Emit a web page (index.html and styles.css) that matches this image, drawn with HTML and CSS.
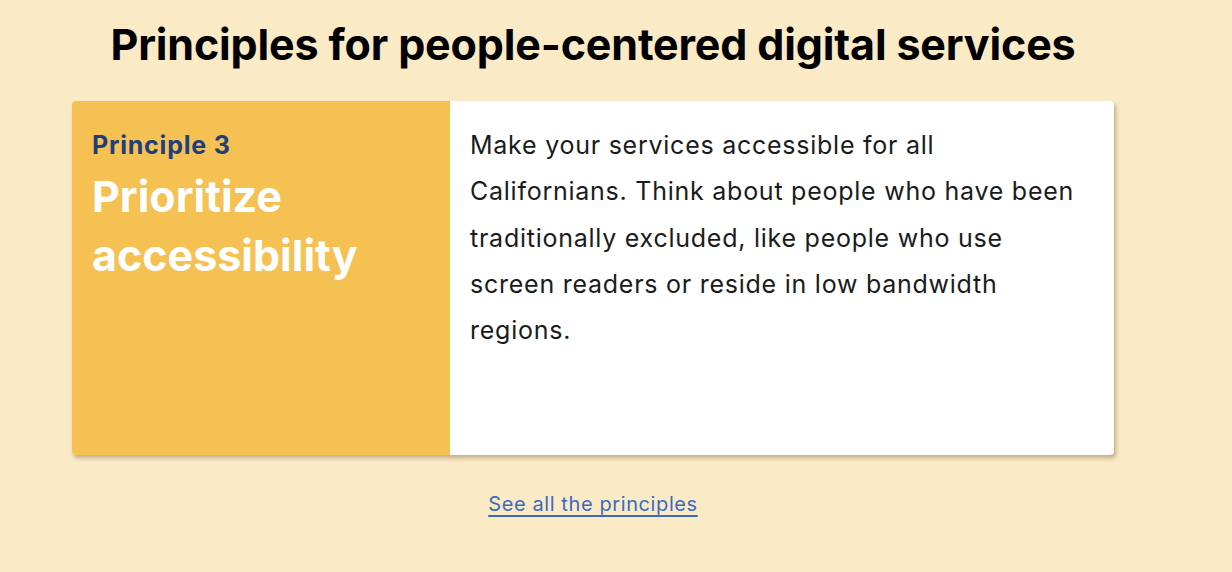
FILE: index.html
```html
<!DOCTYPE html>
<html lang="en">
<head>
<meta charset="utf-8">
<title>Principles for people-centered digital services</title>
<link rel="stylesheet" href="styles.css">
</head>
<body>
<main class="wrap">
  <h1 class="title">Principles for people-centered digital services</h1>
  <section class="card">
    <div class="card-side">
      <p class="eyebrow">Principle 3</p>
      <h2 class="card-title">Prioritize accessibility</h2>
    </div>
    <div class="card-body">
      <p class="card-text">Make your services accessible for all Californians. Think about people who have been traditionally excluded, like people who use screen readers or reside in low bandwidth regions.</p>
    </div>
  </section>
  <div class="more">
    <a class="more-link" href="#">See all the principles</a>
  </div>
</main>
</body>
</html>
```

FILE: styles.css
```css
html, body {
  margin: 0;
  padding: 0;
}
body {
  background: #fbeac6;
  font-family: Inter, "Liberation Sans", sans-serif;
  color: #1b1b1b;
  width: 1232px;
  height: 572px;
  overflow: hidden;
}
.wrap {
  width: 1042px;
  margin-left: 72px;
  display: flex;
  flex-direction: column;
  align-items: center;
}
.title {
  margin: 14px 0 0;
  font-size: 43px;
  line-height: 60px;
  font-weight: 700;
  letter-spacing: -0.15px;
  color: #000;
  text-align: center;
}
.card {
  margin-top: 27px;
  width: 100%;
  height: 354px;
  display: flex;
  border-radius: 4px;
  overflow: hidden;
  box-shadow: 2px 3px 4px rgba(80, 60, 20, 0.35);
  background: #fff;
}
.card-side {
  width: 378px;
  flex: none;
  background: #f4c152;
  padding: 27px 20px 0;
  box-sizing: border-box;
}
.eyebrow {
  margin: 0;
  font-size: 25px;
  line-height: 34px;
  font-weight: 700;
  letter-spacing: 0.8px;
  color: #1e3f7f;
}
.card-title {
  margin: 5px 0 0;
  font-size: 43px;
  line-height: 59px;
  font-weight: 700;
  color: #fff;
}
.card-body {
  flex: 1;
  padding: 21px 29px 0 20px;
}
.card-text {
  margin: 0;
  font-size: 25px;
  line-height: 46.3px;
  letter-spacing: 0.75px;
  color: #1b1b1b;
}
.more {
  margin-top: 35px;
}
.more-link {
  font-size: 20px;
  line-height: 28px;
  letter-spacing: 0.6px;
  color: #3a6bc2;
  text-decoration: underline;
  text-decoration-thickness: 2px;
  text-underline-offset: 4px;
}
```
